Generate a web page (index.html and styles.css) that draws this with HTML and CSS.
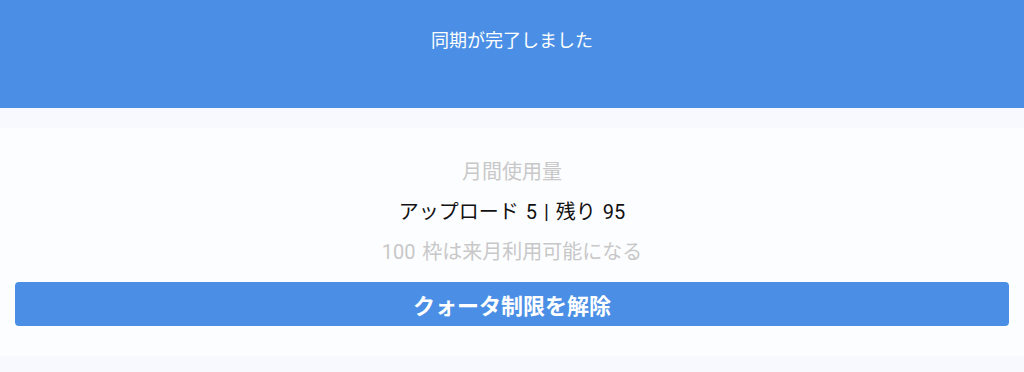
FILE: index.html
```html
<!DOCTYPE html>
<html lang="ja">
<head>
<meta charset="utf-8">
<link rel="stylesheet" href="styles.css">
</head>
<body>
<header class="banner">
  <div class="banner-title">同期が完了しました</div>
</header>
<main class="page">
  <section class="card">
    <div class="line muted">月間使用量</div>
    <div class="line strong">アップロード 5 | 残り 95</div>
    <div class="line muted">100 枠は来月利用可能になる</div>
    <button class="unlock">クォータ制限を解除</button>
  </section>
</main>
</body>
</html>
```

FILE: styles.css
```css
html, body {
  margin: 0;
  padding: 0;
}
body {
  width: 1024px;
  height: 372px;
  overflow: hidden;
  background: #f8f9fe;
  font-family: "Noto Sans CJK JP", "Noto Sans", sans-serif;
}
.banner {
  height: 108px;
  background: #4a8fe5;
  display: flex;
  justify-content: center;
}
.banner-title {
  color: #ffffff;
  font-size: 18px;
  line-height: 24px;
  margin-top: 27px;
}
.page {
  padding-top: 20px;
}
.card {
  background: #fcfdff;
  height: 228px;
  box-sizing: border-box;
  padding: 24px 15px 0;
  display: flex;
  flex-direction: column;
  align-items: center;
}
.line {
  font-family: "Roboto", "Noto Sans CJK JP", "Noto Sans", sans-serif;
  font-size: 20px;
  line-height: 40px;
  height: 40px;
  word-spacing: 2px;
}
.line.muted {
  color: #c8c8c8;
}
.line.strong {
  color: #111111;
}
.unlock {
  margin-top: 10px;
  width: 100%;
  height: 44px;
  border: none;
  border-radius: 4px;
  background: #4a8fe5;
  color: #ffffff;
  font-family: "Noto Sans CJK JP", "Noto Sans", sans-serif;
  font-size: 22px;
  font-weight: bold;
  padding: 0;
}
```
